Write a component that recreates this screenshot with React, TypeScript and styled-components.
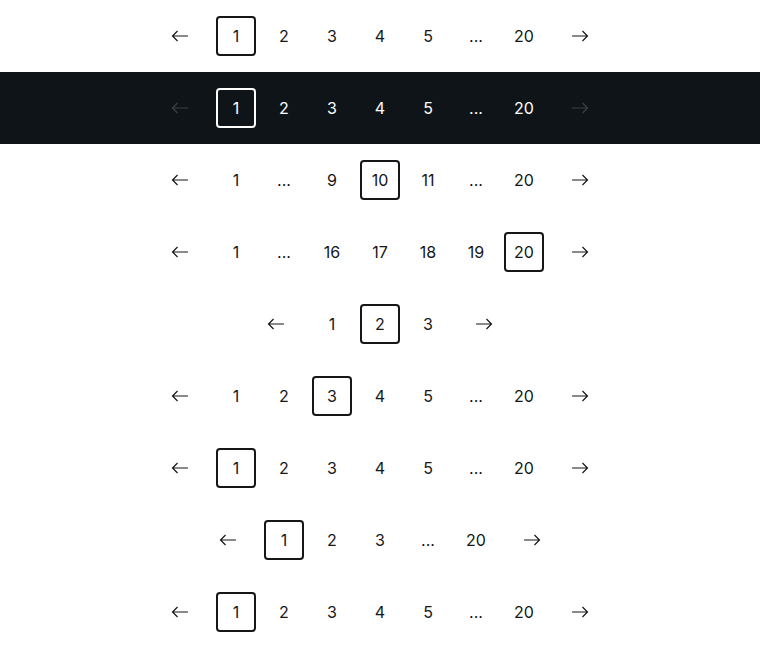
import styled, { createGlobalStyle } from "styled-components";

const GlobalStyle = createGlobalStyle`
  body {
    margin: 0;
    background: #ffffff;
    font-family: Inter, "Noto Sans", sans-serif;
  }
`;

const Page = styled.div`
  display: flex;
  flex-direction: column;
`;

const Row = styled.div<{ $dark?: boolean }>`
  height: 72px;
  display: flex;
  justify-content: center;
  align-items: center;
  background: ${({ $dark }) => ($dark ? "#0f1418" : "#ffffff")};
  color: ${({ $dark }) => ($dark ? "#ffffff" : "#161616")};
`;

const Pages = styled.div`
  display: flex;
  gap: 8px;
  margin: 0 16px;
`;

const ArrowButton = styled.div<{ $dark?: boolean }>`
  width: 40px;
  height: 40px;
  display: flex;
  align-items: center;
  justify-content: center;
  color: ${({ $dark }) => ($dark ? "#3b4046" : "#161616")};
`;

const PageItem = styled.div<{ $active?: boolean; $dark?: boolean }>`
  width: 40px;
  height: 40px;
  box-sizing: border-box;
  display: flex;
  align-items: center;
  justify-content: center;
  font-size: 16px;
  border-radius: 4px;
  border: 2px solid
    ${({ $active, $dark }) =>
      $active ? ($dark ? "#ffffff" : "#161616") : "transparent"};
`;

function Arrow({ dir }: { dir: "left" | "right" }) {
  return (
    <svg width="18" height="12" viewBox="0 0 18 12" fill="none">
      {dir === "left" ? (
        <path d="M17 6H1.5M6.5 1L1.5 6l5 5" stroke="currentColor" strokeWidth="1.2" />
      ) : (
        <path d="M1 6h15.5M11.5 1l5 5-5 5" stroke="currentColor" strokeWidth="1.2" />
      )}
    </svg>
  );
}

type Variant = { items: string[]; active: string; dark?: boolean };

const rows: Variant[] = [
  { items: ["1", "2", "3", "4", "5", "...", "20"], active: "1" },
  { items: ["1", "2", "3", "4", "5", "...", "20"], active: "1", dark: true },
  { items: ["1", "...", "9", "10", "11", "...", "20"], active: "10" },
  { items: ["1", "...", "16", "17", "18", "19", "20"], active: "20" },
  { items: ["1", "2", "3"], active: "2" },
  { items: ["1", "2", "3", "4", "5", "...", "20"], active: "3" },
  { items: ["1", "2", "3", "4", "5", "...", "20"], active: "1" },
  { items: ["1", "2", "3", "...", "20"], active: "1" },
  { items: ["1", "2", "3", "4", "5", "...", "20"], active: "1" },
];

export default function App() {
  return (
    <>
      <GlobalStyle />
      <Page>
        {rows.map((row, i) => (
          <Row key={i} $dark={row.dark}>
            <ArrowButton $dark={row.dark}>
              <Arrow dir="left" />
            </ArrowButton>
            <Pages>
              {row.items.map((item, j) => (
                <PageItem key={j} $active={item === row.active} $dark={row.dark}>
                  {item}
                </PageItem>
              ))}
            </Pages>
            <ArrowButton $dark={row.dark}>
              <Arrow dir="right" />
            </ArrowButton>
          </Row>
        ))}
      </Page>
    </>
  );
}
